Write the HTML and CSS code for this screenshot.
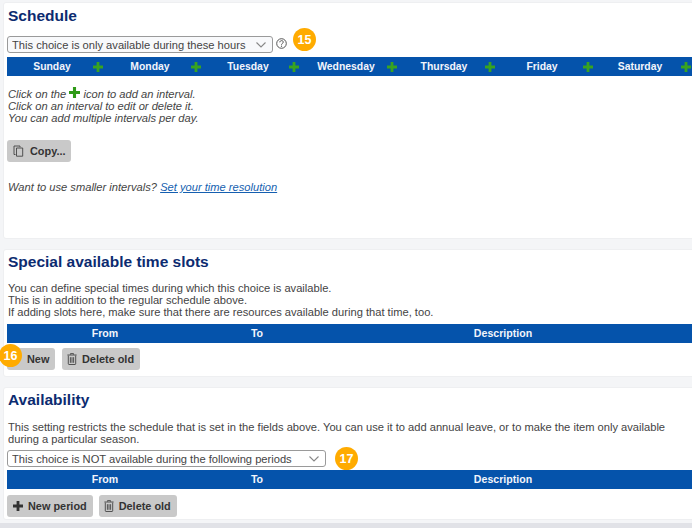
FILE: index.html
```html
<!DOCTYPE html>
<html lang="en">
<head>
<meta charset="utf-8">
<title>Schedule</title>
<link rel="stylesheet" href="styles.css">
</head>
<body>
<svg class="defs" width="0" height="0" aria-hidden="true">
  <symbol id="plus" viewBox="0 0 10 10"><path d="M3.6 0h2.800v3.600H10v2.800H6.400V10H3.600V6.400H0V3.600h3.600z"/></symbol>
  <symbol id="trash" viewBox="0 0 10 12"><path d="M3.500 1.600V.6h3v1M.4 2h9.200M1.300 2.600v8.200c0 .4.3.7.7.7h6c.4 0 .7-.3.7-.7V2.600M3.400 4.200v5.600M5 4.200v5.600M6.600 4.200v5.600" fill="none" stroke="currentColor" stroke-width=".9"/></symbol>
</svg>
<main class="page">
  <section class="card card-schedule">
    <h2 class="title">Schedule</h2>
    <div class="select-row">
      <select class="select select-short"><option>This choice is only available during these hours</option></select>
      <svg class="help" viewBox="0 0 11 11" width="11" height="11"><circle cx="5.500" cy="5.500" r="4.800" fill="none" stroke="#444" stroke-width=".9"/><path d="M3.800 4.300c0-2.200 3.500-2.200 3.500-.2 0 1.300-1.800 1.300-1.800 2.600" fill="none" stroke="#444" stroke-width=".9"/><circle cx="5.500" cy="8.200" r=".6" fill="#444"/></svg>
      <span class="badge badge-15">15</span>
    </div>
    <div class="week">
      <div class="day"><span class="day-name">Sunday</span><svg class="add"><use href="#plus"/></svg></div>
      <div class="day"><span class="day-name">Monday</span><svg class="add"><use href="#plus"/></svg></div>
      <div class="day"><span class="day-name">Tuesday</span><svg class="add"><use href="#plus"/></svg></div>
      <div class="day"><span class="day-name">Wednesday</span><svg class="add"><use href="#plus"/></svg></div>
      <div class="day"><span class="day-name">Thursday</span><svg class="add"><use href="#plus"/></svg></div>
      <div class="day"><span class="day-name">Friday</span><svg class="add"><use href="#plus"/></svg></div>
      <div class="day"><span class="day-name">Saturday</span><svg class="add"><use href="#plus"/></svg></div>
    </div>
    <p class="hint hint-intervals">Click on the <svg class="add add-inline"><use href="#plus"/></svg> icon to add an interval.<br>Click on an interval to edit or delete it.<br>You can add multiple intervals per day.</p>
    <button class="btn btn-copy" type="button">
      <svg class="btn-icon icon-copy" viewBox="0 0 11 12" width="11" height="12"><path d="M2.500 9.500H1V1h6v1.200M3.500 3h6.200v8.200H3.500z" fill="none" stroke="#444" stroke-width=".9"/></svg>Copy...
    </button>
    <p class="hint hint-resolution">Want to use smaller intervals? <a class="link" href="#">Set your time resolution</a></p>
  </section>

  <section class="card card-special">
    <h2 class="title">Special available time slots</h2>
    <p class="text text-special">You can define special times during which this choice is available.<br>This is in addition to the regular schedule above.<br>If adding slots here, make sure that there are resources available during that time, too.</p>
    <div class="thead"><span>From</span><span>To</span><span>Description</span></div>
    <div class="actions">
      <span class="badge badge-over">16</span>
      <button class="btn btn-new" type="button">New</button>
      <button class="btn" type="button"><svg class="btn-icon icon-trash"><use href="#trash"/></svg>Delete old</button>
    </div>
  </section>

  <section class="card card-availability">
    <h2 class="title">Availability</h2>
    <p class="text text-availability">This setting restricts the schedule that is set in the fields above. You can use it to add annual leave, or to make the item only available during a particular season.</p>
    <div class="select-row select-row-tight">
      <select class="select select-long"><option>This choice is NOT available during the following periods</option></select>
      <span class="badge badge-17">17</span>
    </div>
    <div class="thead thead-tight"><span>From</span><span>To</span><span>Description</span></div>
    <div class="actions actions-low">
      <button class="btn" type="button"><svg class="btn-icon icon-plus"><use href="#plus"/></svg>New period</button>
      <button class="btn" type="button"><svg class="btn-icon icon-trash"><use href="#trash"/></svg>Delete old</button>
    </div>
  </section>
</main>
</body>
</html>
```
FILE: styles.css
```css
* { box-sizing: border-box; }
html, body { margin: 0; height: 100%; overflow: hidden; }
body {
  background: #f4f5f7;
  color: #444;
  font-family: "Liberation Sans", Arial, sans-serif;
  font-size: 11.15px;
  line-height: 12px;
}
.defs { position: absolute; }
.page { width: 692px; height: 528px; padding: 2px 0 0 3px; overflow: hidden; border-bottom: 5px solid #e1e2e7; }
.card {
  width: 700px;
  background: #fff;
  border: 1px solid #eeeff1;
  border-radius: 3px;
  padding: 0 0 0 3px;
  margin-bottom: 10px;
}
.card-schedule { height: 237px; }
.card-special { height: 128px; }
.card-availability { height: 133px; margin-bottom: 0; }
.title {
  margin: 0;
  padding-left: 1px;
  color: #0c2b70;
  font-size: 15.5px;
  line-height: 18px;
  font-weight: bold;
}
.card-schedule .title { margin-top: 4px; }
.card-special .title { margin-top: 3px; }
.card-availability .title { margin-top: 3px; }

.select-row { display: flex; align-items: center; margin-top: 11px; height: 17px; }
.select-row-tight { margin-top: 5px; }
.select {
  appearance: none;
  height: 17px;
  padding: 0 0 0 4px;
  border: 1px solid #9a9a9a;
  border-radius: 3px;
  color: #444;
  font: 11.15px "Liberation Sans", Arial, sans-serif;
  background: #f8f9fb url("data:image/svg+xml,%3Csvg xmlns='http://www.w3.org/2000/svg' width='10' height='6'%3E%3Cpath d='M.5.5 5 5 9.500.5' fill='none' stroke='%23888' stroke-width='1.100'/%3E%3C/svg%3E") no-repeat right 6px center;
}
.select-short { width: 266px; }
.select-long { width: 319px; background-color: #fff; }
.help { margin: 0 0 2px 3px; flex: none; }
.badge {
  display: flex;
  align-items: center;
  justify-content: center;
  flex: none;
  width: 23px;
  height: 23px;
  border-radius: 50%;
  background: #ffab00;
  color: #fff;
  font-size: 12.5px;
  font-weight: bold;
}
.badge-15 { margin: -10px 0 0 6px; }
.badge-17 { margin-left: 9px; }
.badge-over { position: absolute; left: -8px; top: -4px; }

.week {
  display: grid;
  grid-template-columns: repeat(7, 98px);
  height: 19px;
  margin-top: 4px;
  background: #0553ab;
}
.day { display: flex; align-items: center; padding-left: 6px; }
.day-name { width: 78px; text-align: center; color: #f2f5fb; font-weight: bold; font-size: 10.4px; }
.add { width: 10px; height: 10px; margin-left: 2px; fill: #38a41f; flex: none; }
.add-inline { margin: 0; vertical-align: 0; fill: #2f9a17; width: 11px; height: 11px; }

.hint { margin: 0; padding-left: 1px; font-style: italic; }
.hint-intervals { margin-top: 11px; }
.hint-resolution { margin-top: 19px; }
.link { color: #155fb0; }
.text { margin: 0; padding-left: 1px; }
.text-special { margin-top: 11px; }
.text-availability { margin-top: 12px; width: 680px; }

.btn {
  display: inline-flex;
  align-items: center;
  height: 22px;
  padding: 0 6px 0 5px;
  border: 0;
  border-radius: 3px;
  background: #c9c9c9;
  color: #333;
  font: bold 10.9px "Liberation Sans", Arial, sans-serif;
}
.btn-copy { width: 64px; margin-top: 16px; padding-left: 6px; }
.btn-new { width: 48px; padding-left: 20px; }
.btn-icon { flex: none; margin: 0 5px 0 0; }
.icon-copy { margin-right: 6px; }
.icon-trash { width: 10px; height: 12px; color: #444; }
.icon-plus { width: 10px; height: 10px; margin-left: 1px; fill: #333; }

.thead {
  display: grid;
  grid-template-columns: 196px 108px 384px;
  height: 19px;
  margin-top: 6px;
  background: #0553ab;
  color: #f2f5fb;
  font-weight: bold;
  font-size: 10.6px;
  line-height: 19px;
  text-align: center;
}
.thead-tight { margin-top: 3px; }
.actions { position: relative; display: flex; gap: 7px; margin-top: 5px; }
.actions-low { margin-top: 6px; gap: 6px; }
```
